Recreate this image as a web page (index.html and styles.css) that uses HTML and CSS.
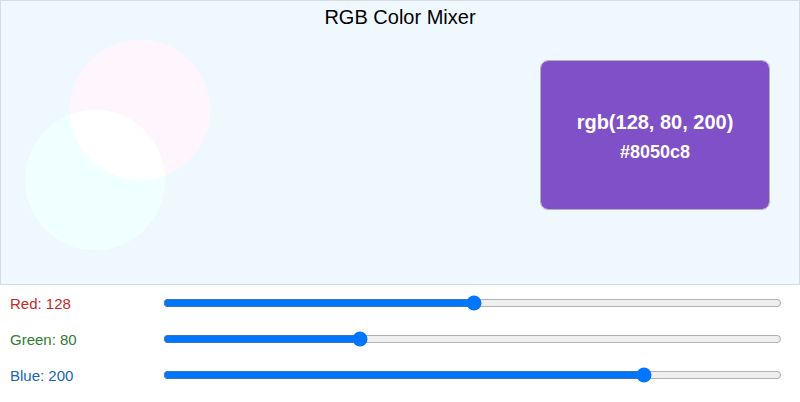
FILE: index.html
```html
<!DOCTYPE html>
<html>
<head>
<meta charset="utf-8">
<link rel="stylesheet" href="styles.css">
</head>
<body>
<div class="stage">
  <svg class="blobs" width="798" height="283" viewBox="0 0 798 283">
    <defs>
      <clipPath id="pinkClip"><circle cx="139" cy="109" r="70"/></clipPath>
    </defs>
    <circle cx="139" cy="109" r="70" fill="#fff5fd"/>
    <circle cx="94" cy="179" r="70" fill="#f0ffff"/>
    <circle cx="94" cy="179" r="70" fill="#ffffff" clip-path="url(#pinkClip)"/>
  </svg>
  <h1 class="title">RGB Color Mixer</h1>
  <div class="swatch" style="background-color:#8050c8">
    <div class="swatch-rgb">rgb(128, 80, 200)</div>
    <div class="swatch-hex">#8050c8</div>
  </div>
</div>
<div class="controls">
  <div class="row">
    <label class="label label-red">Red: 128</label>
    <input class="slider" type="range" min="0" max="255" value="128">
  </div>
  <div class="row">
    <label class="label label-green">Green: 80</label>
    <input class="slider" type="range" min="0" max="255" value="80">
  </div>
  <div class="row">
    <label class="label label-blue">Blue: 200</label>
    <input class="slider" type="range" min="0" max="255" value="200">
  </div>
</div>
</body>
</html>
```
FILE: styles.css
```css
* { box-sizing: border-box; }
html, body {
  margin: 0;
  padding: 0;
  background: #ffffff;
  font-family: "Liberation Sans", Arial, sans-serif;
}
.stage {
  position: relative;
  width: 800px;
  height: 285px;
  background: #f0f8ff;
  border: 1px solid #d3dbe3;
  padding-top: 5px;
}
.blobs {
  position: absolute;
  left: 0;
  top: 0;
}
.title {
  position: relative;
  margin: 0;
  font-size: 20px;
  font-weight: normal;
  line-height: 23px;
  text-align: center;
  color: #000;
}
.swatch {
  position: absolute;
  left: 539px;
  top: 59px;
  width: 230px;
  height: 150px;
  border: 1px solid #b3aec6;
  background-clip: padding-box;
  border-radius: 8px;
  display: flex;
  flex-direction: column;
  align-items: center;
  justify-content: center;
  gap: 8px;
  padding-top: 3px;
  color: #ffffff;
  font-weight: bold;
}
.swatch-rgb {
  font-size: 20px;
  line-height: 23px;
}
.swatch-hex {
  font-size: 18px;
  line-height: 21px;
}
.controls {
  display: flex;
  flex-direction: column;
}
.row {
  display: flex;
  align-items: center;
  height: 36px;
  padding: 0 16px 0 10px;
}
.label {
  width: 151px;
  flex-shrink: 0;
  font-size: 15px;
}
.label-red { color: #c62828; }
.label-green { color: #2e7d32; }
.label-blue { color: #1565c0; }
.slider {
  flex: 1;
  margin: 2px;
}
```
